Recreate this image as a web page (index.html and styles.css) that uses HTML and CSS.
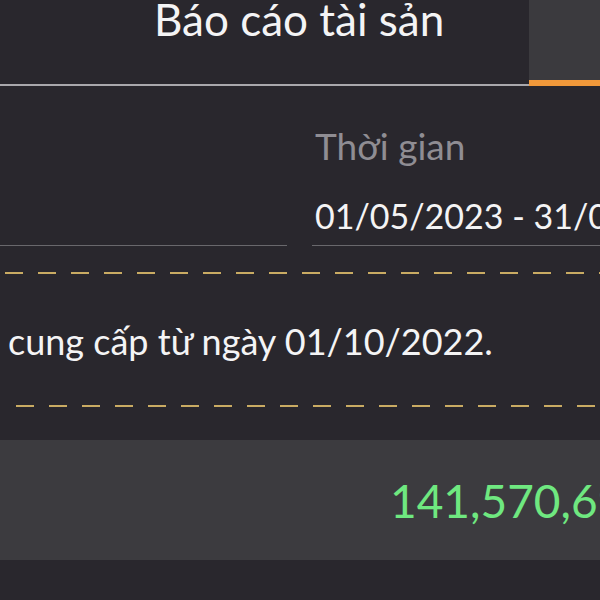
FILE: index.html
```html
<!DOCTYPE html>
<html>
<head>
  <title>Báo cáo tài sản</title>
  <link rel="stylesheet" href="styles.css">
</head>
<body>

  <header class="tabs">
    <div class="tab tab-active">Báo cáo tài sản</div>
    <div class="tab tab-other"></div>
  </header>

  <div class="filters">
    <div class="field field-left"></div>
    <div class="field field-right">
      <div class="field-label">Thời gian</div>
      <div class="field-value">01/05/2023 - 31/05/2023</div>
    </div>
  </div>

  <div class="dashes dashes-top"></div>
  <p class="note">cung cấp từ ngày 01/10/2022.</p>
  <div class="dashes dashes-bottom"></div>

  <div class="total-row">
    <span class="total-value">141,570,690</span>
  </div>

</body>
</html>
```
FILE: styles.css
```css
body {
  margin: 0;
  width: 600px;
  height: 600px;
  overflow: hidden;
  font-family: 'Lato', sans-serif;
  background-color: #29272d;
  color: #f4f4f5;
}

.tabs {
  display: flex;
  height: 88px;
}

.tab-active {
  width: 529px;
  height: 86px;
  padding-left: 154px;
  box-sizing: border-box;
  border-bottom: 2px solid #a9a8ac;
  font-size: 44px;
  line-height: 38px;
  white-space: nowrap;
}

.tab-other {
  flex: 1;
  height: 80px;
  background: #3b3a3e;
  border-bottom: 6px solid #f0983a;
}

.filters {
  display: flex;
  gap: 25px;
  height: 158px;
}

.field {
  flex: 1;
  border-bottom: 1px solid #69686c;
}

.field-left {
  flex: 0 0 287px;
}

.field-right {
  padding-left: 3px;
  white-space: nowrap;
  overflow: hidden;
}

.field-label {
  margin-top: 36px;
  font-size: 37px;
  line-height: 44px;
  color: #8f8d93;
}

.field-value {
  margin-top: 26px;
  font-size: 34px;
  line-height: 44px;
}

.dashes {
  height: 2px;
  background: repeating-linear-gradient(to right, #c9ab63 0 18px, transparent 18px 33px);
}

.dashes-top {
  margin: 26px 0 0 5px;
}

.dashes-bottom {
  margin: 0 0 0 16px;
}

.note {
  margin: 0;
  padding: 41px 0 38px 8px;
  font-size: 36px;
  line-height: 52px;
  white-space: nowrap;
}

.total-row {
  margin-top: 33px;
  height: 120px;
  background: #3c3b3f;
  display: flex;
  align-items: center;
  padding-left: 390px;
  white-space: nowrap;
  overflow: hidden;
}

.total-value {
  font-size: 46px;
  color: #6fe880;
}
```
